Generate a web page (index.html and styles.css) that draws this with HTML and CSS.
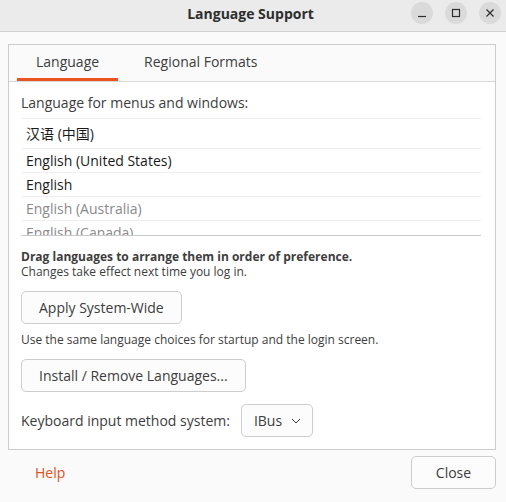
FILE: index.html
```html
<!DOCTYPE html>
<html lang="en">
<head>
  <meta charset="UTF-8" />
  <title>Language Support</title>
  <link rel="stylesheet" href="styles.css">
</head>
<body>
  <div class="titlebar">
    <span class="title">Language Support</span>
    <div class="controls">
      <span class="wbtn">
        <svg width="10" height="10" viewBox="0 0 10 10"><path d="M1 8.5h8" stroke="#2e2e2e" stroke-width="1.2"/></svg>
      </span>
      <span class="wbtn">
        <svg width="10" height="10" viewBox="0 0 10 10"><rect x="1.5" y="1.5" width="7" height="7" fill="none" stroke="#2e2e2e" stroke-width="1.2"/></svg>
      </span>
      <span class="wbtn">
        <svg width="10" height="10" viewBox="0 0 10 10"><path d="M1.5 1.5l7 7M8.5 1.5l-7 7" stroke="#2e2e2e" stroke-width="1.2"/></svg>
      </span>
    </div>
  </div>

  <div class="content">
    <div class="notebook">
      <div class="tabs">
        <span class="tab active">Language</span>
        <span class="tab">Regional Formats</span>
      </div>
      <div class="page">
        <div class="label">Language for menus and windows:</div>
        <div class="langlist">
          <div class="row cjk">汉语 (中国)</div>
          <div class="row">English (United States)</div>
          <div class="row">English</div>
          <div class="row dim">English (Australia)</div>
          <div class="row dim">English (Canada)</div>
        </div>
        <p class="note"><strong>Drag languages to arrange them in order of preference.</strong><br>Changes take effect next time you log in.</p>
        <button class="btn">Apply System-Wide</button>
        <p class="note single">Use the same language choices for startup and the login screen.</p>
        <button class="btn">Install / Remove Languages...</button>
        <div class="kbrow">
          <span class="label">Keyboard input method system:</span>
          <button class="btn combo">IBus
            <svg width="10" height="6" viewBox="0 0 10 6"><path d="M1 1l4 4 4-4" fill="none" stroke="#3d3d3d" stroke-width="1"/></svg>
          </button>
        </div>
      </div>
    </div>

    <div class="actions">
      <span class="help">Help</span>
      <button class="btn close">Close</button>
    </div>
  </div>
</body>
</html>
```

FILE: styles.css
```css
body { margin: 0; width: 506px; height: 502px; background: #fafafa; font-family: "Open Sans", "Noto Sans CJK SC", sans-serif; color: #3d3d3d; overflow: hidden; }
.titlebar { height: 31px; border-bottom: 1px solid #d0d0d0; background: #ebebeb; display: flex; align-items: center; justify-content: center; position: relative; }
.title { font-weight: bold; font-size: 14px; color: #2e2e2e; margin-top: -5px; margin-left: -5px; }
.controls { position: absolute; right: 5px; top: 2px; display: flex; gap: 12px; }
.wbtn { width: 22px; height: 22px; border-radius: 50%; background: #dadada; display: flex; align-items: center; justify-content: center; }
.content { padding: 12px 10px 0 8px; }
.notebook { border: 1px solid #cdcdcd; background: #fff; }
.tabs { display: flex; gap: 7px; padding-left: 8px; height: 36px; border-bottom: 1px solid #d8d8d8; background: #fafafa; }
.tab { padding: 0 19px; font-size: 14px; line-height: 34px; color: #3d3d3d; border-bottom: 3px solid transparent; height: 33px; }
.tab.active { border-bottom-color: #e95420; }
.page { padding: 11px 13px 12px 12px; }
.label { font-size: 14px; line-height: 20px; }
.langlist { margin-top: 5px; border-top: 1px solid #efefef; border-bottom: 1px solid #c8c8c8; height: 116px; overflow: hidden; margin-right: 1px; }
.row { padding-left: 5px; height: 23px; line-height: 23px; border-bottom: 1px solid #efefef; font-size: 14px; color: #1a1a1a; }
.row.cjk { height: 29px; line-height: 29px; }
.row.dim { color: #8a8a8a; }
.note { margin: 13px 0 0; font-size: 12px; line-height: 15px; }
.note strong { color: #3d3d3d; }
.btn { display: block; font-family: inherit; font-size: 14px; color: #3d3d3d; background: #fcfcfc; border: 1px solid #cdcdcd; border-radius: 5px; height: 33px; padding: 0 17px; }
.page > .btn { margin-top: 12px; }
.page > .note.single { margin-top: 8px; }
.kbrow { display: flex; align-items: center; gap: 11px; margin-top: 12px; }
.combo { display: flex; align-items: center; gap: 9px; padding: 0 11px 0 12px; }
.actions { display: flex; justify-content: space-between; align-items: center; margin-top: 6px; padding-left: 27px; }
.help { color: #e0511d; font-size: 14px; }
.close { width: 85px; }
```
